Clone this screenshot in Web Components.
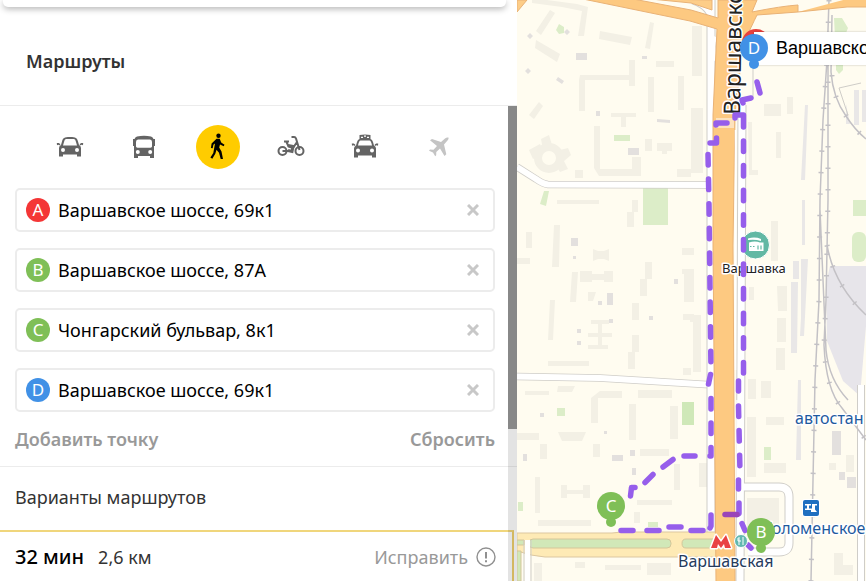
<!DOCTYPE html>
<html lang="ru">
<head>
<meta charset="utf-8">
<meta name="viewport" content="width=device-width, initial-scale=1">
<title>Маршруты</title>
<style>
  body {
    margin: 0;
    font-family: "Noto Sans", "Open Sans", sans-serif;
    font-size: 18px;
    color: #000;
    background: #fff;
  }
</style>
</head>
<body>
<routes-app></routes-app>

<script>
const ICONS = {
  car: `<path fill-rule="evenodd" d="M6 5.500C7 2 8 1 14 1s7 1 8 4.500l1 3.500q2 1 2 3v8.500h-4v-2H7v2H3V12q0-2 2-3zM8 6 7 9.500h14L20 6q-.6-3-2-3h-8q-1.400 0-2 3zM7 12a2 2 0 1 0 0 4 2 2 0 0 0 0-4zm14 0a2 2 0 1 0 0 4 2 2 0 0 0 0-4z"/><path d="M.8 7h2l1.400 1v1.500L2.300 8.800 1 9.200zM27.200 7h-2l-1.400 1v1.500l1.900-.7 1.300.4z"/>`,
  bus: `<path fill-rule="evenodd" d="M7 .5q7-1.500 14 0 2 .5 2.500 2.500H25v7h-1v12h-4v-2H8v2H4V10H3V3h1.500Q5 1 7 .5zM8 3.500Q6 3.500 6 6v4.500q0 1 1.500 1.200h13q1.500-.2 1.500-1.200V6q0-2.500-2-2.500zM7.800 14a2 2 0 1 0 0 4 2 2 0 0 0 0-4zm12.400 0a2 2 0 1 0 0 4 2 2 0 0 0 0-4z"/>`,
  walk: `<circle cx="14.500" cy="-.2" r="2.200"/><path d="M12.500 2.800h3.200l1.500 3.700 3.300 2.300-.8 1.500-3.700-1.800-.8 3 2.300 4 1.500 7.500h-2.300l-1.700-6.200-2.500-3-1.200 4-3 5-1.900-1.200 2.900-4.600 1.700-9.500-1.600 1.200-.7 3.600-1.800-.4.700-4.500z"/>`,
  bike: `<g fill="none" stroke="currentColor" stroke-width="2"><circle cx="5.500" cy="15" r="4"/><circle cx="22.500" cy="15" r="4"/><path d="M7 5.500h5M9.500 6l2 4.500 4.500 1.500 4-6M14.500 1h2.500q1.500 0 2 1.500L22.500 14M5.500 15h9.500"/><path stroke-width="3" d="m11 9.500 5 1-1 5-4-1"/></g>`,
  taxi: `<path fill-rule="evenodd" d="M8.500-1q5.500-1 11 0V3q1.800.5 2.500 3l1 3.500q2 1 2 3v9h-4v-2H7v2H3v-9q0-2 2-3L6 6q.7-2.500 2.500-3zM9.500 4.500Q8 4.500 7 9.500h14q-1-5-2.500-5zM7 12.500a2 2 0 1 0 0 4 2 2 0 0 0 0-4zm14 0a2 2 0 1 0 0 4 2 2 0 0 0 0-4zM10 .7V2h2V.7zM13-.5V.8h2V-.5zM16 .7V2h2V.7z"/><path d="M.8 7.500h2l1.400 1V10l-1.900-.7-1.300.4zM27.200 7.500h-2l-1.400 1V10l1.900-.7 1.300.4z"/>`,
  plane: `<path d="M23.500 1.500q-2-.5-3.500 1l-4 3.500-9-3-2 1.300L12 10l-3.500 3.700-3.500-.2L4 14.700l4 1.800 2.200 3.800 1-1 .1-3.300 3.700-3.500 4.500 7.500 1.800-1.800-2.300-9.700 3.500-4q1.500-1.500 1-3z"/>`
};

class ModeButton extends HTMLElement {
  constructor() {
    super();
    this.attachShadow({mode: 'open'});
  }

  connectedCallback() {
    const active = this.hasAttribute('active');
    this.shadowRoot.innerHTML = `
      <style>
        :host { display: block; }
        button {
          display: flex;
          align-items: center;
          justify-content: center;
          width: 44px;
          height: 44px;
          padding: 0;
          border: 0;
          border-radius: 50%;
          background: none;
          color: #646464;
          cursor: pointer;
        }
        :host([active]) button { background: #fc0; color: #000; }
        :host([muted]) button { color: #c4c4c4; }
        svg { width: 28px; height: 22px; overflow: visible; fill: currentColor; }
      </style>
      <button type="button" aria-label="${this.getAttribute('label')}" aria-pressed="${active}">
        <svg viewBox="0 0 28 22" aria-hidden="true">${ICONS[this.getAttribute('icon')]}</svg>
      </button>
    `;
  }
}

customElements.define('mode-button', ModeButton);

class RoutePoint extends HTMLElement {
  constructor() {
    super();
    this.attachShadow({mode: 'open'});
  }

  connectedCallback() {
    const letter = this.getAttribute('letter');
    this.shadowRoot.innerHTML = `
      <style>
        :host {
          display: flex;
          align-items: center;
          box-sizing: border-box;
          height: 44px;
          padding: 0 8px 0 9px;
          border: 2px solid #ececec;
          border-radius: 5px;
          background: #fff;
        }
        label {
          flex: none;
          width: 24px;
          height: 24px;
          border-radius: 50%;
          background: var(--point-color);
          color: #fff;
          font-size: 17px;
          line-height: 24px;
          text-align: center;
        }
        input {
          flex: 1;
          min-width: 0;
          padding: 0 8px;
          border: 0;
          outline: 0;
          background: none;
          color: #000;
          font: inherit;
        }
        button {
          display: flex;
          padding: 6px;
          border: 0;
          background: none;
          cursor: pointer;
        }
        svg { width: 12px; height: 12px; stroke: #c8c8c8; stroke-width: 3; }
      </style>
      <label for="address">${letter}</label>
      <input id="address" type="text" value="${this.getAttribute('address')}">
      <button type="button" aria-label="Удалить точку ${letter}">
        <svg viewBox="0 0 12 12"><path d="m1 1 10 10M11 1 1 11"/></svg>
      </button>
    `;
  }
}

customElements.define('route-point', RoutePoint);

class RouteSnippet extends HTMLElement {
  constructor() {
    super();
    this.attachShadow({mode: 'open'});
  }

  connectedCallback() {
    this.shadowRoot.innerHTML = `
      <style>
        :host {
          flex: 1;
          display: flex;
          align-items: flex-start;
          box-sizing: border-box;
          margin-right: 3px;
          padding: 10px 16px 0 15px;
          border-top: 2px solid #f0d67c;
          border-right: 2px solid #edcf6e;
          line-height: 30px;
        }
        .time { font-size: 20px; font-weight: 500; }
        .distance { margin-left: 14px; color: #333; }
        button {
          display: flex;
          align-items: center;
          gap: 8px;
          margin-left: auto;
          padding: 0;
          border: 0;
          background: none;
          color: #999;
          font: inherit;
          line-height: 30px;
          cursor: pointer;
        }
        svg { width: 20px; height: 20px; fill: none; stroke: #909090; }
      </style>
      <span class="time"><slot name="time"></slot></span>
      <span class="distance"><slot name="distance"></slot></span>
      <button type="button">Исправить
        <svg viewBox="0 0 20 20" aria-hidden="true"><circle cx="10" cy="10" r="9" stroke-width="1.400"/><path stroke-width="2" d="M10 5v6.500M10 13.200v2"/></svg>
      </button>
    `;
  }
}

customElements.define('route-snippet', RouteSnippet);

class RoutePanel extends HTMLElement {
  constructor() {
    super();
    this.attachShadow({mode: 'open'});
  }

  connectedCallback() {
    this.shadowRoot.innerHTML = `
      <style>
        :host {
          display: flex;
          flex-direction: column;
          min-width: 0;
          background: #fff;
        }
        header {
          display: flex;
          flex-direction: column;
          border-bottom: 1px solid #ececec;
        }
        .search-edge {
          height: 7px;
          margin: 0 11px 0 3px;
          border-radius: 0 0 5px 5px;
          background: #fff;
          box-shadow: 0 2px 6px rgba(0, 0, 0, .3);
        }
        h1 {
          margin: 0;
          padding: 40px 26px 30px;
          color: #333;
          font-size: 18px;
          font-weight: 600;
          line-height: 28px;
        }
        .body {
          position: relative;
          flex: 1;
          display: flex;
          flex-direction: column;
        }
        nav {
          display: flex;
          justify-content: space-between;
          padding: 19px 56px 19px 48px;
        }
        .points {
          display: flex;
          flex-direction: column;
          gap: 16px;
          padding: 0 22px 0 15px;
        }
        .actions {
          display: flex;
          justify-content: space-between;
          padding: 13px 22px 13px 15px;
          border-bottom: 1px solid #ececec;
        }
        .actions button {
          padding: 0;
          border: 0;
          background: none;
          color: #999;
          font: inherit;
          font-weight: 600;
          line-height: 28px;
          cursor: pointer;
        }
        h2 {
          margin: 0;
          padding: 15px 15px 18px;
          color: #333;
          font-size: 18px;
          font-weight: 400;
          line-height: 30px;
        }
        .scrollbar {
          position: absolute;
          top: 0;
          right: 0;
          bottom: 0;
          width: 9px;
          background: rgba(0, 0, 0, .11);
        }
        .thumb { height: 68%; background: #888; }
      </style>
      <header>
        <div class="search-edge"></div>
        <h1>Маршруты</h1>
      </header>
      <div class="body">
        <div class="scrollbar"><div class="thumb"></div></div>
        <nav>
          <mode-button icon="car" label="Автомобиль"></mode-button>
          <mode-button icon="bus" label="Автобус"></mode-button>
          <mode-button icon="walk" label="Пешком" active></mode-button>
          <mode-button icon="bike" label="Велосипед"></mode-button>
          <mode-button icon="taxi" label="Такси"></mode-button>
          <mode-button icon="plane" label="Самолёт" muted></mode-button>
        </nav>
        <div class="points"><slot></slot></div>
        <div class="actions">
          <button type="button">Добавить точку</button>
          <button type="button">Сбросить</button>
        </div>
        <h2>Варианты маршрутов</h2>
        <slot name="routes"></slot>
      </div>
    `;
  }
}

customElements.define('route-panel', RoutePanel);

class MapPin extends HTMLElement {
  constructor() {
    super();
    this.attachShadow({mode: 'open'});
  }

  connectedCallback() {
    this.shadowRoot.innerHTML = `
      <style>
        :host {
          position: absolute;
          left: var(--x);
          top: var(--y);
          display: flex;
          flex-direction: column;
          align-items: center;
          width: 28px;
          margin-left: -14px;
          color: #fff;
        }
        .head {
          width: 28px;
          height: 28px;
          border-radius: 50%;
          background: var(--point-color);
          font-size: 17px;
          line-height: 28px;
          text-align: center;
        }
        .foot {
          width: 10px;
          height: 10px;
          margin-top: -3px;
          border-radius: 50%;
          background: var(--point-color);
        }
      </style>
      <div class="head"><slot></slot></div>
      <div class="foot"></div>
    `;
  }
}

customElements.define('map-pin', MapPin);

class CityMap extends HTMLElement {
  constructor() {
    super();
    this.attachShadow({mode: 'open'});
  }

  connectedCallback() {
    this.shadowRoot.innerHTML = `
      <style>
        :host {
          position: relative;
          display: block;
          overflow: hidden;
          min-width: 0;
          background: #fffcf0;
        }
        svg {
          position: absolute;
          inset: 0;
          width: 100%;
          height: 100%;
        }
        .house { fill: #f3f0e5; }
        .house-line { fill: none; stroke: #f3f0e5; stroke-width: 4; }
        .grey { fill: #e3e0de; }
        .green { fill: #dcedc8; }
        .casing { fill: none; stroke: #cfcdc8; }
        .lane { fill: none; stroke: #fff; }
        .rail { fill: none; stroke: #c3c1c5; stroke-width: 1.5; }
        .ties { fill: none; stroke: #c3c1c5; stroke-width: 5; stroke-dasharray: 1.5 20; }
        .route { fill: none; stroke: #965eeb; stroke-width: 5.5; stroke-linecap: round; stroke-linejoin: round; }
        .steps { stroke-dasharray: 10.5 14.1; }
        .label { fill: #222; stroke: #fff; stroke-width: 3; stroke-linejoin: round; paint-order: stroke; font-size: 16px; }
        .rail-label { fill: #1e5a9e; }
        .metro-label { fill: #263b5c; }
        .place-label { font-size: 13px; }
        .road-label { font-size: 23px; }
        .callout {
          position: absolute;
          left: 237px;
          top: 32px;
          padding-left: 22px;
          background: #fff;
          box-shadow: 0 0 2px rgba(0, 0, 0, .25);
          font-family: "Liberation Sans", Arial, sans-serif;
          font-size: 18px;
          line-height: 33px;
          white-space: nowrap;
        }
      </style>
      <svg viewBox="517 0 349 581" preserveAspectRatio="xMinYMin slice" role="img" aria-label="Карта маршрута">
        <!-- houses -->
        <g class="house">
          <path d="m550 10 5 3-14 22-5-4zM577 4l11 3-4 29h-6l4-25-20-4-30-4V0h15zM536 40l24 14-3 8-22-14zM600 31l32 6-2 8-31-6zM650 22l4 1-4 26-5-1zM656 61h18v6h-18zM580 75h49V60h6v26h-6v-6h-44v31h-6V80zM648 77h6v35h-6zM678 76h6v34h-6zM611 113h25v4h-10v10h-5v-10h-10zM594 126h6v43h32v-12h9v19h-42l-5-8zM539 102l4 4-9 13-5-4zM645 139h7v12h-7zM657 143h15v8h-5v3h-5v-3h-5zM575 170h8v8h-8zM677 169h14v8h-14z"/>
          <path d="M557 200h42v4h-42zM526 232h6v16h-6zM517 258h13v6h-13zM554 225h6l-1 42h-7zM593 249l5 2h6l5-2v12l-5-2h-6l-5 2zM580 271h12v3h12v-3h9v11h-9v-2h-12v2h-12zM572 272h6l-2 30h-6zM550 300h5l-2 40h-5zM588 292h8l-3 9h-5zM548 361h41v5h-41zM632 200h6v12h-4v15h-7v-15h5zM645 262h7v17h-5v17h-7v-17h5zM632 303h7v17h-7zM632 335h7v17h-4v17h-7v-17h4zM682 248h12v7h-12zM682 269h12v33h-10v-28h-2zM683 314h11v6h-11zM683 368h8v7h-8z"/>
          <path d="M525 391h24v4h-24zM558 386h17l-3 6h-15zM600 391h22v7h-24v25h-7v-25zM638 390h34v8h-34zM629 404h7v36h-7zM670 406h8v33h-8zM558 432h28l-4 9h-20zM517 433h22v7h-22zM540 444h7v15h-7zM593 444h7v13h-7zM640 449h29v7h-29zM674 464h6v26h-6zM535 477h5v36h-5zM561 485h6v5h16v-5h7v13h-7v-4h-16v4h-6zM538 520h53v6h-53zM637 500h35v5h-35zM634 512h6v11h-6zM534 563h8v18h-8zM575 562h10v6h-10zM605 565h36v5h-36zM647 563h24v12h-24zM699 463h9v24h-9z"/>
          <path d="M692 26h10v50h-10zM691 108h12v65h-12zM764 104h17v12h-17zM787 97h6v17h-6zM776 132h5v26h-5zM748 122h4v48h6v5h-9zM771 221h7v40h-7zM777 286h10v25h-9zM777 318h9v24h-9zM776 348h9v22h-9zM749 287h5v13h-5zM748 379h8v20h-8zM761 381h10v17h-10zM747 417h9v60h-9zM766 417h18v8h-18zM764 463h22v10h-22zM747 498h32v30h-32zM846 455h8v17h-8zM829 463h7v7h-7zM690 315h11v57h-8v-50h-3zM834 553h9v12h10v10h-19z"/>
        </g>
        <path class="house-line" d="M591 322h18M588 335h24M588 347h20M600 322v24"/>
        <circle cx="549" cy="158" r="11" fill="none" stroke="#f3f0e5" stroke-width="8"/>
        <path class="house" d="m541 139 8-4 3 10-9 5zM529 150l11-6 4 8-11 7zM560 150l8-2 3 7-7 6 4 8-8 3-5-8z"/>
        <g class="grey">
          <path d="M576 53h11v7h-11zM527 36l3-3 3 3-3 3zM564 32l3-3 3 3-3 3zM525 71l3-3 3 3-3 3zM558 77l6 4-2 3-6-4zM642 56h5v3h-5zM596 111h4v5h-4zM657 119l13 1v3l-13-1zM628 148h11v7h-11zM571 238h7v8h-7zM573 256h3v3h-3zM607 293h6v12h-6zM598 301h4v4h-4zM674 279h4v5h-4zM649 316h4v4h-4zM577 329h4v4h-4zM577 341h4v4h-4zM609 319h4v4h-4zM612 455h11v6h-11zM523 454h4v7h-4zM630 450h5v6h-5zM632 468h4v7h-4zM540 413h4v4h-4zM604 431h3v3h-3zM832 431h9v24h-9zM839 472h6v8h-6zM847 477h9v11h-9z"/>
          <path fill="#e9e7e7" d="M805 105h3l-3 75h-4zM802 200h3v45h-3zM801 259h7l-4 77h-4l1-18zM793 261h6v18h-6zM791 282h7l-1 71h-6zM798 380h3v80h-5zM858 0h8v2h-8zM854 90h5v35h-5zM862 90h4v32h-4zM846 104l4 20h-4z"/>
          <path fill="#e7e5ea" d="M847 266h19v60l-6 70-17-15-16-40-1-58 4-17h16z"/>
        </g>
        <g class="green">
          <path d="m559 24 5 3v6l-5 1-3-4zM614 135h16v6h-16zM544 191h5l-3 15-6-2zM643 188h25v37h-25zM557 408h8v8h-8zM518 502h5v9h-5zM648 522h10v5h-10zM834 18h8l6 10-4 10h-9zM836 55h7v15l-4 4-3-4zM764 447h7v13h-7zM853 200h13v16h-13z"/>
          <rect x="852" y="232" width="14" height="30" rx="6"/>
          <path fill="#cfe8b8" d="M682 402h12v23h-12z"/>
        </g>

        <!-- side streets -->
        <path class="casing" stroke-width="7.5" d="M517 167 536 179Q543 184 548 184.500L714 185M517 376.500 600 378 714 385"/>
        <path class="lane" stroke-width="6" d="M517 167 536 179Q543 184 548 184.500L714 185M517 376.500 600 378 714 385"/>
        <path class="casing" stroke-width="9" d="M740 487h39q10 0 10 10v46q0 9-10 9h-31M711 0v540M742 105l-2 476M711 14q-5-10-18-14M714 36q-4 9 0 25"/>
        <path class="lane" stroke-width="7" d="M740 487h39q10 0 10 10v46q0 9-10 9h-31M711 0v540M742 105l-2 476M711 14q-5-10-18-14M714 36q-4 9 0 25"/>
        <path d="M861 385v196" class="casing" stroke-width="8"/><path d="M861 385v196" class="lane" stroke-width="6"/>

        <!-- boulevard -->
        <path d="M517 533h95l10-1h95v25H545q-14-1-28-6z" fill="#feeab5" stroke="#dcc7a0"/>
        <rect x="529" y="539" width="142" height="9" rx="4" fill="#d1e8b8" stroke="#d4c69a"/>
        <path d="M717 539h-31q-4 0-4 4.500t4 4.500h31zM517 540h7v5h-7zM517 551h4v30h-4z" fill="#d1e8b8" stroke="#d4c69a"/>
        <path d="M525 540h5v41h-5z" fill="#fff"/>
        <path d="M524 540v41M531 540v41" class="casing"/>

        <!-- railways -->
        <g>
          <path class="rail" d="M829 0 827 60 823 120 820 200 819 300 815 380 813 480 811 581M828 60 828 200 826 300 824 345Q826 390 842 408L866 440M832 15 831 72Q833 98 846 116 855 130 866 139M827 245Q834 285 866 315M820 210 826 350Q829 380 848 400"/>
          <path class="ties" d="M829 0 827 60 823 120 820 200 819 300 815 380 813 480 811 581M828 60 828 200 826 300 824 345Q826 390 842 408L866 440M832 75Q833 98 846 116 855 130 866 139M827 245Q834 285 866 315"/>
          <path class="casing" d="m839 88 22-5M839 88l9 27M753 38v60"/>
        </g>

        <!-- main road -->
        <path d="M583-1 633-1 691 10 718 18V0h39l-5 12q30-6 46-7v7l-41 3q-5 10-14 30l-8 70-2 130 2 337h-19l-3-337V115l4-86-27-8z" fill="#fdc981" stroke="#e9b276"/>
        <path d="M651-1 691 3 712 10V0zM517 0h10l-10 12z" fill="#fdcd88" stroke="#e9b276"/>
        <path d="M847-1h20v8h-20l-49 5" fill="#fdc981" stroke="#e9b276"/>
        <path d="M716 118h18v10h-18z" fill="#fde2bd"/>
        <path d="M735.500 130v240M737 400v85" stroke="#fff" stroke-width="1.5"/>

        <!-- museum -->
        <circle cx="755.500" cy="245" r="14" fill="#62b8a4" stroke="#fff"/>
        <path d="M748 238.500q7-2 13 .5v2q-6-2-13-1zM749 242.500q6-2 11 0h3.500v8.500H749z" fill="#fff"/>
        <path d="M758 245.500v4M761 245.500v4M750 246.500h1.500M753 246.500h1.500" stroke="#62b8a4" stroke-width="1.2"/>

        <text class="label place-label" x="722" y="273">Варшавка</text>
        <text class="label road-label" transform="translate(740 115) rotate(-89)">Варшавское</text>

        <!-- walking route -->
        <g class="route">
          <path class="steps" d="M708 154.500 709 205 711 372"/>
          <path d="M710.500 374.500 708.500 384"/>
          <path class="steps" d="M711 398.500V447"/>
          <path d="M711 447.500V456h-1M695 456h-11M673 459.500l-10 7.500M653 474.500l-8 8M630.500 496l1-8.500h3.500M621 530.500h12M647 530.500h12M669 527h12M691 530.500h12M711 515v11l-1 2"/>
          <path class="steps" d="M743.500 141v235"/>
          <path d="M757 82l3 11M751 98l-9 2 1 3M735 118v-3h8.500v12M727 123h-11v2M716.500 138v5H710M738.500 381v10"/>
          <path class="steps" d="M738.500 406 740 472"/>
          <path d="M738.500 480v9M739 503v10.500l-2 1M742 523.500l3 7M748 545l3 3"/>
          <path d="M725 514.500h12" stroke="#9a45b8"/>
        </g>

        <!-- cafe, metro, station -->
        <circle cx="741" cy="541" r="6.500" fill="#62b8b0" stroke="#fff"/>
        <path d="M739 537v8M743 537v8M738 538v3h3" fill="none" stroke="#fff"/>
        <path d="m711 548 5-13 5 7 5-7 5 13h-6l-1-4-3 4-3-4-1 4z" fill="#e94244" stroke="#fff" stroke-width="3" paint-order="stroke" stroke-linejoin="round"/>
        <rect x="803" y="500" width="16" height="16" rx="2" fill="#1f6fc0" stroke="#fff" paint-order="stroke" stroke-width="2"/>
        <path d="M805 504h6v1.500h-2v3h3V504h5v1.500h-2v4l2 2.500h-6v-2h-6v-1.500h2v-3h-2z" fill="#fff"/>

        <text class="label rail-label" x="795" y="424">автостан</text>
        <text class="label rail-label" x="762" y="534">Коломенское</text>
        <text class="label metro-label" x="678" y="567">Варшавская</text>
        <circle cx="756" cy="43" r="14" fill="#e8403c"/>
      </svg>
      <div class="callout"><slot name="callout"></slot></div>
      <slot></slot>
    `;
  }
}

customElements.define('city-map', CityMap);

class RoutesApp extends HTMLElement {
  constructor() {
    super();
    this.attachShadow({mode: 'open'});
  }

  connectedCallback() {
    this.shadowRoot.innerHTML = `
      <style>
        :host {
          --red: #f43636;
          --green: #7fbf57;
          --blue: #4191e6;
          display: grid;
          grid-template-columns: minmax(300px, 59.7%) 1fr;
          grid-template-rows: minmax(0, 1fr);
          height: 100vh;
          overflow: hidden;
        }
        .red { --point-color: var(--red); }
        .green { --point-color: var(--green); }
        .blue { --point-color: var(--blue); }
      </style>
      <route-panel>
        <route-point class="red" letter="A" address="Варшавское шоссе, 69к1"></route-point>
        <route-point class="green" letter="B" address="Варшавское шоссе, 87А"></route-point>
        <route-point class="green" letter="C" address="Чонгарский бульвар, 8к1"></route-point>
        <route-point class="blue" letter="D" address="Варшавское шоссе, 69к1"></route-point>
        <route-snippet slot="routes">
          <span slot="time">32 мин</span>
          <span slot="distance">2,6 км</span>
        </route-snippet>
      </route-panel>
      <city-map>
        <span slot="callout">Варшавское шоссе, 69к1</span>
        <map-pin class="blue" style="--x: 237px; --y: 34px">D</map-pin>
        <map-pin class="green" style="--x: 94px; --y: 492px">C</map-pin>
        <map-pin class="green" style="--x: 244px; --y: 518px">B</map-pin>
      </city-map>
    `;
  }
}

customElements.define('routes-app', RoutesApp);
</script>
</body>
</html>
